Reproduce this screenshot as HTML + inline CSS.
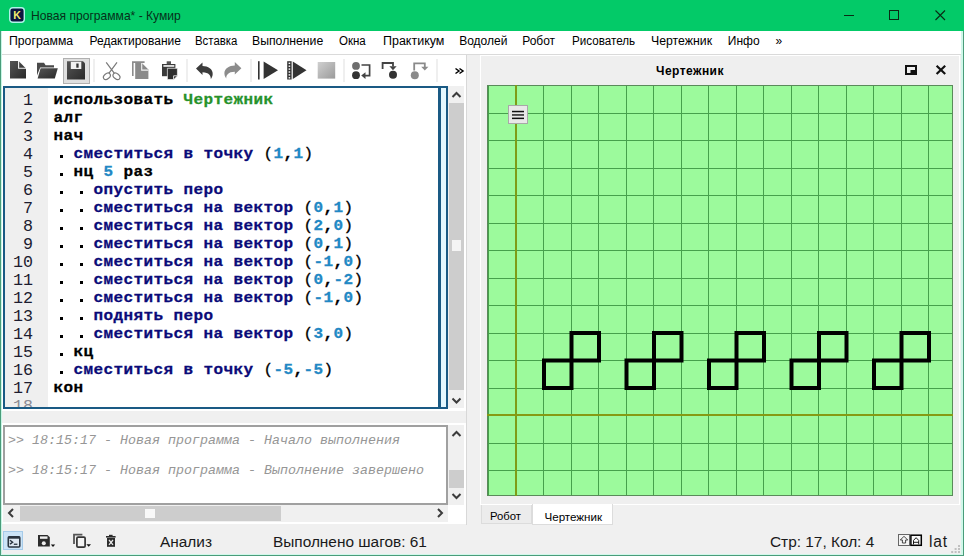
<!DOCTYPE html><html><head><meta charset="utf-8"><style>
*{margin:0;padding:0}
html,body{width:964px;height:556px;overflow:hidden;background:#f0f0f0}
.a{position:absolute}
.t{position:absolute;font-family:'Liberation Sans',sans-serif;white-space:pre;line-height:1}
.code{position:absolute;font-family:"Liberation Mono",monospace;font-size:16px;letter-spacing:0.4px;white-space:pre;line-height:18px;transform:scaleY(0.9);transform-origin:0 13.3px;-webkit-text-stroke:0.3px currentColor}
.ln{position:absolute;width:28px;text-align:right;font-family:'Liberation Mono',monospace;font-size:16.67px;color:#1c1c30;line-height:18px}
</style></head><body><div class="a " style="left:0px;top:0px;width:964px;height:556px;background:#f0f0f0"></div>
<div class="a " style="left:0px;top:0px;width:964px;height:31px;background:#03ca68"></div>
<svg class="a" style="left:9px;top:7px" width="16" height="16" viewBox="0 0 16 16">
<rect x="0.7" y="0.7" width="14.6" height="14.6" rx="3" fill="#0c1640" stroke="#b0f4ea" stroke-width="1.4"/>
<text x="8" y="12.2" text-anchor="middle" font-family="Liberation Sans" font-weight="bold" font-size="10.5" fill="#f4ee70">K</text>
</svg>
<div class="t " style="left:31px;top:10px;font-size:12.1px;color:#06301a">Новая программа* - Кумир</div>
<svg class="a" style="left:830px;top:0px" width="130" height="31">
<rect x="14" y="15" width="10" height="1" fill="#0a2a14"/>
<rect x="59.5" y="10.5" width="9" height="9" fill="none" stroke="#0a2a14" stroke-width="1"/>
<path d="M105.5 10.5 L115 20 M115 10.5 L105.5 20" stroke="#0a2a14" stroke-width="1.1"/>
</svg>
<div class="a " style="left:2px;top:31px;width:960px;height:23px;background:#ffffff"></div>
<div class="a " style="left:2px;top:54px;width:960px;height:1px;background:#dadada"></div>
<div class="t " style="left:9.2px;top:35px;font-size:12px;color:#000;transform:scaleX(1.02);transform-origin:0 0">Программа</div>
<div class="t " style="left:89.5px;top:35px;font-size:12px;color:#000;transform:scaleX(1);transform-origin:0 0">Редактирование</div>
<div class="t " style="left:195.1px;top:35px;font-size:12px;color:#000;transform:scaleX(0.95);transform-origin:0 0">Вставка</div>
<div class="t " style="left:252.2px;top:35px;font-size:12px;color:#000;transform:scaleX(1.02);transform-origin:0 0">Выполнение</div>
<div class="t " style="left:339.0px;top:35px;font-size:12px;color:#000;transform:scaleX(0.96);transform-origin:0 0">Окна</div>
<div class="t " style="left:382.9px;top:35px;font-size:12px;color:#000;transform:scaleX(1.04);transform-origin:0 0">Практикум</div>
<div class="t " style="left:459.2px;top:35px;font-size:12px;color:#000;transform:scaleX(1);transform-origin:0 0">Водолей</div>
<div class="t " style="left:522.2px;top:35px;font-size:12px;color:#000;transform:scaleX(1);transform-origin:0 0">Робот</div>
<div class="t " style="left:571.6px;top:35px;font-size:12px;color:#000;transform:scaleX(0.97);transform-origin:0 0">Рисователь</div>
<div class="t " style="left:650.5px;top:35px;font-size:12px;color:#000;transform:scaleX(1.025);transform-origin:0 0">Чертежник</div>
<div class="t " style="left:727.8000000000001px;top:35px;font-size:12px;color:#000;transform:scaleX(1);transform-origin:0 0">Инфо</div>
<div class="t " style="left:775.6px;top:35px;font-size:12px;color:#000;transform:scaleX(1);transform-origin:0 0">»</div>
<div class="a " style="left:2px;top:55px;width:464px;height:31px;background:#ffffff"></div>
<div class="a " style="left:2px;top:86px;width:464px;height:325px;background:#ffffff"></div>
<div class="a " style="left:3px;top:86px;width:445px;height:323px;border:2px solid #1a5a84;box-sizing:border-box;background:#fff"></div>
<div class="a " style="left:5px;top:88px;width:43px;height:319px;background:#efefef"></div>
<div class="a " style="left:441px;top:88px;width:5px;height:319px;background:#e4f8ff"></div>
<div class="a " style="left:438px;top:88px;width:3px;height:319px;background:#1a5a84"></div>
<div class="a " style="left:448px;top:86px;width:16px;height:322px;background:#f0f0f0"></div>
<div class="a " style="left:449px;top:103px;width:15px;height:287px;background:#cdcdcd"></div>
<div class="a " style="left:452px;top:240px;width:9px;height:11px;background:#f4f4f4"></div>
<div class="a" style="left:5px;top:88px;width:433px;height:319px;overflow:hidden">
<div class="code" style="left:48.5px;top:2.799999999999997px"><span style="color:#000000;font-weight:bold">использовать</span><span style="color:#000000;font-weight:bold"> </span><span style="color:#27922a;font-weight:bold">Чертежник</span></div>
<div class="code" style="left:48.5px;top:20.799999999999997px"><span style="color:#000000;font-weight:bold">алг</span></div>
<div class="code" style="left:48.5px;top:38.8px"><span style="color:#000000;font-weight:bold">нач</span></div>
<div class="code" style="left:68.5px;top:56.80000000000001px"><span style="color:#0a0a78;font-weight:bold">сместиться в точку</span><span style="color:#000000;font-weight:bold"> </span><span style="color:#000000;font-weight:normal">(</span><span style="color:#2288c4;font-weight:bold">1</span><span style="color:#000000;font-weight:bold">,</span><span style="color:#2288c4;font-weight:bold">1</span><span style="color:#000000;font-weight:normal">)</span></div>
<div class="a" style="left:55px;top:67px;width:3px;height:3px;background:#000"></div>
<div class="code" style="left:68.5px;top:74.80000000000001px"><span style="color:#000000;font-weight:bold">нц</span><span style="color:#000000;font-weight:bold"> </span><span style="color:#2288c4;font-weight:bold">5</span><span style="color:#000000;font-weight:bold"> </span><span style="color:#000000;font-weight:bold">раз</span></div>
<div class="a" style="left:55px;top:85px;width:3px;height:3px;background:#000"></div>
<div class="code" style="left:88.5px;top:92.80000000000001px"><span style="color:#0a0a78;font-weight:bold">опустить перо</span></div>
<div class="a" style="left:55px;top:103px;width:3px;height:3px;background:#000"></div>
<div class="a" style="left:75px;top:103px;width:3px;height:3px;background:#000"></div>
<div class="code" style="left:88.5px;top:110.80000000000001px"><span style="color:#0a0a78;font-weight:bold">сместиться на вектор</span><span style="color:#000000;font-weight:bold"> </span><span style="color:#000000;font-weight:normal">(</span><span style="color:#2288c4;font-weight:bold">0</span><span style="color:#000000;font-weight:bold">,</span><span style="color:#2288c4;font-weight:bold">1</span><span style="color:#000000;font-weight:normal">)</span></div>
<div class="a" style="left:55px;top:121px;width:3px;height:3px;background:#000"></div>
<div class="a" style="left:75px;top:121px;width:3px;height:3px;background:#000"></div>
<div class="code" style="left:88.5px;top:128.8px"><span style="color:#0a0a78;font-weight:bold">сместиться на вектор</span><span style="color:#000000;font-weight:bold"> </span><span style="color:#000000;font-weight:normal">(</span><span style="color:#2288c4;font-weight:bold">2</span><span style="color:#000000;font-weight:bold">,</span><span style="color:#2288c4;font-weight:bold">0</span><span style="color:#000000;font-weight:normal">)</span></div>
<div class="a" style="left:55px;top:139px;width:3px;height:3px;background:#000"></div>
<div class="a" style="left:75px;top:139px;width:3px;height:3px;background:#000"></div>
<div class="code" style="left:88.5px;top:146.8px"><span style="color:#0a0a78;font-weight:bold">сместиться на вектор</span><span style="color:#000000;font-weight:bold"> </span><span style="color:#000000;font-weight:normal">(</span><span style="color:#2288c4;font-weight:bold">0</span><span style="color:#000000;font-weight:bold">,</span><span style="color:#2288c4;font-weight:bold">1</span><span style="color:#000000;font-weight:normal">)</span></div>
<div class="a" style="left:55px;top:157px;width:3px;height:3px;background:#000"></div>
<div class="a" style="left:75px;top:157px;width:3px;height:3px;background:#000"></div>
<div class="code" style="left:88.5px;top:164.8px"><span style="color:#0a0a78;font-weight:bold">сместиться на вектор</span><span style="color:#000000;font-weight:bold"> </span><span style="color:#000000;font-weight:normal">(</span><span style="color:#2288c4;font-weight:bold">-1</span><span style="color:#000000;font-weight:bold">,</span><span style="color:#2288c4;font-weight:bold">0</span><span style="color:#000000;font-weight:normal">)</span></div>
<div class="a" style="left:55px;top:175px;width:3px;height:3px;background:#000"></div>
<div class="a" style="left:75px;top:175px;width:3px;height:3px;background:#000"></div>
<div class="code" style="left:88.5px;top:182.8px"><span style="color:#0a0a78;font-weight:bold">сместиться на вектор</span><span style="color:#000000;font-weight:bold"> </span><span style="color:#000000;font-weight:normal">(</span><span style="color:#2288c4;font-weight:bold">0</span><span style="color:#000000;font-weight:bold">,</span><span style="color:#2288c4;font-weight:bold">-2</span><span style="color:#000000;font-weight:normal">)</span></div>
<div class="a" style="left:55px;top:193px;width:3px;height:3px;background:#000"></div>
<div class="a" style="left:75px;top:193px;width:3px;height:3px;background:#000"></div>
<div class="code" style="left:88.5px;top:200.8px"><span style="color:#0a0a78;font-weight:bold">сместиться на вектор</span><span style="color:#000000;font-weight:bold"> </span><span style="color:#000000;font-weight:normal">(</span><span style="color:#2288c4;font-weight:bold">-1</span><span style="color:#000000;font-weight:bold">,</span><span style="color:#2288c4;font-weight:bold">0</span><span style="color:#000000;font-weight:normal">)</span></div>
<div class="a" style="left:55px;top:211px;width:3px;height:3px;background:#000"></div>
<div class="a" style="left:75px;top:211px;width:3px;height:3px;background:#000"></div>
<div class="code" style="left:88.5px;top:218.8px"><span style="color:#0a0a78;font-weight:bold">поднять перо</span></div>
<div class="a" style="left:55px;top:229px;width:3px;height:3px;background:#000"></div>
<div class="a" style="left:75px;top:229px;width:3px;height:3px;background:#000"></div>
<div class="code" style="left:88.5px;top:236.8px"><span style="color:#0a0a78;font-weight:bold">сместиться на вектор</span><span style="color:#000000;font-weight:bold"> </span><span style="color:#000000;font-weight:normal">(</span><span style="color:#2288c4;font-weight:bold">3</span><span style="color:#000000;font-weight:bold">,</span><span style="color:#2288c4;font-weight:bold">0</span><span style="color:#000000;font-weight:normal">)</span></div>
<div class="a" style="left:55px;top:247px;width:3px;height:3px;background:#000"></div>
<div class="a" style="left:75px;top:247px;width:3px;height:3px;background:#000"></div>
<div class="code" style="left:68.5px;top:254.8px"><span style="color:#000000;font-weight:bold">кц</span></div>
<div class="a" style="left:55px;top:265px;width:3px;height:3px;background:#000"></div>
<div class="code" style="left:68.5px;top:272.8px"><span style="color:#0a0a78;font-weight:bold">сместиться в точку</span><span style="color:#000000;font-weight:bold"> </span><span style="color:#000000;font-weight:normal">(</span><span style="color:#2288c4;font-weight:bold">-5</span><span style="color:#000000;font-weight:bold">,</span><span style="color:#2288c4;font-weight:bold">-5</span><span style="color:#000000;font-weight:normal">)</span></div>
<div class="a" style="left:55px;top:283px;width:3px;height:3px;background:#000"></div>
<div class="code" style="left:48.5px;top:290.8px"><span style="color:#000000;font-weight:bold">кон</span></div>
<div class="ln" style="left:0px;top:4px">1</div>
<div class="ln" style="left:0px;top:22px">2</div>
<div class="ln" style="left:0px;top:40px">3</div>
<div class="ln" style="left:0px;top:58px">4</div>
<div class="ln" style="left:0px;top:76px">5</div>
<div class="ln" style="left:0px;top:94px">6</div>
<div class="ln" style="left:0px;top:112px">7</div>
<div class="ln" style="left:0px;top:130px">8</div>
<div class="ln" style="left:0px;top:148px">9</div>
<div class="ln" style="left:0px;top:166px">10</div>
<div class="ln" style="left:0px;top:184px">11</div>
<div class="ln" style="left:0px;top:202px">12</div>
<div class="ln" style="left:0px;top:220px">13</div>
<div class="ln" style="left:0px;top:238px">14</div>
<div class="ln" style="left:0px;top:256px">15</div>
<div class="ln" style="left:0px;top:274px">16</div>
<div class="ln" style="left:0px;top:292px">17</div>
<div class="ln" style="left:0px;top:310px;color:#8a8a94">18</div>
</div>
<div class="a " style="left:2px;top:423px;width:464px;height:101px;background:#ffffff"></div>
<div class="a " style="left:3px;top:425px;width:445px;height:80px;border:2px solid #a0a0a0;box-sizing:border-box;background:#fff"></div>
<div class="t " style="left:8px;top:434px;font-family:'Liberation Mono';font-style:italic;font-size:13.33px;color:#969696;white-space:pre">&gt;&gt; 18:15:17 - Новая программа - Начало выполнения</div>
<div class="t " style="left:8px;top:464px;font-family:'Liberation Mono';font-style:italic;font-size:13.33px;color:#969696;white-space:pre">&gt;&gt; 18:15:17 - Новая программа - Выполнение завершено</div>
<div class="a " style="left:448px;top:425px;width:16px;height:80px;background:#f0f0f0"></div>
<div class="a " style="left:449px;top:470px;width:15px;height:18px;background:#cdcdcd"></div>
<div class="a " style="left:3px;top:505px;width:445px;height:17px;background:#f0f0f0"></div>
<div class="a " style="left:20px;top:506px;width:261px;height:15px;background:#cdcdcd"></div>
<div class="a " style="left:145px;top:509px;width:10px;height:9px;background:#f8f8f8"></div>
<div class="a " style="left:448px;top:505px;width:16px;height:17px;background:#ffffff"></div>
<svg class="a" style="left:0;top:0" width="964" height="556"><path d="M452.5,97 L456.5,93 L460.5,97" fill="none" stroke="#3c3c3c" stroke-width="2"/><path d="M452.5,398.5 L456.5,402.5 L460.5,398.5" fill="none" stroke="#3c3c3c" stroke-width="2"/><path d="M452.5,436 L456.5,432 L460.5,436" fill="none" stroke="#3c3c3c" stroke-width="2"/><path d="M452.5,494 L456.5,498 L460.5,494" fill="none" stroke="#3c3c3c" stroke-width="2"/><path d="M13,509 L9,513 L13,517" fill="none" stroke="#3c3c3c" stroke-width="2"/><path d="M438,509 L442,513 L438,517" fill="none" stroke="#3c3c3c" stroke-width="2"/></svg>
<div class="t " style="left:160px;top:534px;font-size:15.4px;color:#1a1a1a">Анализ</div>
<div class="t " style="left:273px;top:534px;font-size:15.4px;color:#1a1a1a">Выполнено шагов: 61</div>
<div class="t " style="left:770px;top:534px;font-size:15.4px;color:#1a1a1a">Стр: 17, Кол: 4</div>
<div class="t " style="left:929px;top:534px;font-size:15.6px;letter-spacing:0.8px;color:#1a1a1a">lat</div>
<div class="a " style="left:480px;top:55px;width:480px;height:450px;background:#ffffff"></div>
<div class="a " style="left:481px;top:56px;width:478px;height:448px;background:#efefef"></div>
<div class="t " style="left:656px;top:64.5px;font-size:12px;letter-spacing:0.45px;font-weight:bold;color:#000">Чертежник</div>
<svg class="a" style="left:487px;top:85px" width="466" height="411"><rect x="0" y="0" width="466" height="411" fill="#9cfa9c"/><rect x="1" y="0" width="1" height="411" fill="#46a04c"/><rect x="56" y="0" width="1" height="411" fill="#46a04c"/><rect x="84" y="0" width="1" height="411" fill="#46a04c"/><rect x="111" y="0" width="1" height="411" fill="#46a04c"/><rect x="139" y="0" width="1" height="411" fill="#46a04c"/><rect x="166" y="0" width="1" height="411" fill="#46a04c"/><rect x="194" y="0" width="1" height="411" fill="#46a04c"/><rect x="221" y="0" width="1" height="411" fill="#46a04c"/><rect x="249" y="0" width="1" height="411" fill="#46a04c"/><rect x="276" y="0" width="1" height="411" fill="#46a04c"/><rect x="304" y="0" width="1" height="411" fill="#46a04c"/><rect x="331" y="0" width="1" height="411" fill="#46a04c"/><rect x="359" y="0" width="1" height="411" fill="#46a04c"/><rect x="386" y="0" width="1" height="411" fill="#46a04c"/><rect x="414" y="0" width="1" height="411" fill="#46a04c"/><rect x="441" y="0" width="1" height="411" fill="#46a04c"/><rect x="0" y="385" width="466" height="1" fill="#46a04c"/><rect x="0" y="358" width="466" height="1" fill="#46a04c"/><rect x="0" y="303" width="466" height="1" fill="#46a04c"/><rect x="0" y="275" width="466" height="1" fill="#46a04c"/><rect x="0" y="248" width="466" height="1" fill="#46a04c"/><rect x="0" y="220" width="466" height="1" fill="#46a04c"/><rect x="0" y="193" width="466" height="1" fill="#46a04c"/><rect x="0" y="165" width="466" height="1" fill="#46a04c"/><rect x="0" y="138" width="466" height="1" fill="#46a04c"/><rect x="0" y="110" width="466" height="1" fill="#46a04c"/><rect x="0" y="83" width="466" height="1" fill="#46a04c"/><rect x="0" y="55" width="466" height="1" fill="#46a04c"/><rect x="0" y="28" width="466" height="1" fill="#46a04c"/><rect x="0.5" y="0.5" width="465" height="410" fill="none" stroke="#5a8a5a" stroke-width="1"/><rect x="28" y="0" width="2" height="411" fill="#7e9c18"/><rect x="0" y="329" width="466" height="2" fill="#869a14"/><path d="M57.00,303.00 L57.00,275.50 L112.00,275.50 L112.00,248.00 L84.50,248.00 L84.50,303.00 L57.00,303.00Z" fill="none" stroke="#000" stroke-width="4" stroke-linecap="square" stroke-linejoin="miter"/><path d="M139.50,303.00 L139.50,275.50 L194.50,275.50 L194.50,248.00 L167.00,248.00 L167.00,303.00 L139.50,303.00Z" fill="none" stroke="#000" stroke-width="4" stroke-linecap="square" stroke-linejoin="miter"/><path d="M222.00,303.00 L222.00,275.50 L277.00,275.50 L277.00,248.00 L249.50,248.00 L249.50,303.00 L222.00,303.00Z" fill="none" stroke="#000" stroke-width="4" stroke-linecap="square" stroke-linejoin="miter"/><path d="M304.50,303.00 L304.50,275.50 L359.50,275.50 L359.50,248.00 L332.00,248.00 L332.00,303.00 L304.50,303.00Z" fill="none" stroke="#000" stroke-width="4" stroke-linecap="square" stroke-linejoin="miter"/><path d="M387.00,303.00 L387.00,275.50 L442.00,275.50 L442.00,248.00 L414.50,248.00 L414.50,303.00 L387.00,303.00Z" fill="none" stroke="#000" stroke-width="4" stroke-linecap="square" stroke-linejoin="miter"/></svg>
<div class="a " style="left:508px;top:105px;width:20px;height:19px;background:#e8e8e8;border:1px solid #a8a8a8;box-sizing:border-box"></div>
<svg class="a" style="left:508px;top:105px" width="20" height="19"><rect x="4" y="5.8" width="12" height="1.5" fill="#111"/><rect x="4" y="9.2" width="12" height="1.5" fill="#222"/><rect x="4" y="12.6" width="12" height="1.5" fill="#111"/></svg>
<div class="a " style="left:481px;top:505px;width:51px;height:19px;background:#ececec;border:1px solid #dcdcdc;border-top:none;box-sizing:border-box"></div>
<div class="t " style="left:490px;top:510.5px;font-size:11.3px;color:#000">Робот</div>
<div class="a " style="left:532px;top:504px;width:81px;height:21px;background:#ffffff;border:1px solid #dcdcdc;border-top:none;box-sizing:border-box"></div>
<div class="t " style="left:544.5px;top:510.8px;font-size:11.6px;color:#000">Чертежник</div>
<div class="a " style="left:466px;top:55px;width:1px;height:470px;background:#d8d8d8"></div>
<svg class="a" style="left:0;top:0" width="964" height="556"><defs><linearGradient id="gd" x1="0" y1="0" x2="1" y2="1"><stop offset="0" stop-color="#555"/><stop offset="1" stop-color="#2a2a2a"/></linearGradient><linearGradient id="gs" x1="0" y1="0" x2="1" y2="1"><stop offset="0" stop-color="#d0d0d0"/><stop offset="1" stop-color="#9a9a9a"/></linearGradient></defs><path d="M10,61 L18.6,61 L26,68.6 L26,78.6 L10,78.6 Z" fill="url(#gd)"/><path d="M18.6,61 L18.6,68.2 L26,68.2" fill="none" stroke="#f4f4f4" stroke-width="1.1"/><path d="M37,62.7 L44,62.7 L45.6,65.2 L54,65.2 L54,67.5 L40.2,67.5 L37,75.5 Z" fill="#4a4a4a"/><path d="M40.6,68.2 L57.8,68.2 L54.8,78.5 L37.6,78.5 Z" fill="url(#gd)"/><rect x="63.5" y="58.5" width="26" height="25" fill="#dfdfdf" stroke="#b0b0b0" stroke-width="1"/><path d="M67,61.2 L83,61.2 L85,63.2 L85,79.5 L67,79.5 Z" fill="url(#gd)"/><rect x="70.8" y="61.8" width="10.5" height="7.2" fill="#f0f0f0"/><rect x="76.3" y="63.5" width="2.3" height="4.2" fill="#333"/><rect x="93.5" y="59" width="1" height="23" fill="#e0e0e0"/><rect x="186.5" y="59" width="1" height="23" fill="#e0e0e0"/><rect x="250.5" y="59" width="1" height="23" fill="#e0e0e0"/><rect x="343.5" y="59" width="1" height="23" fill="#e0e0e0"/><rect x="436.5" y="59" width="1" height="23" fill="#e0e0e0"/><g fill="none" stroke="#7a7a7a" stroke-width="1.2"><path d="M106.2,62.3 L114.2,73.2 M117,62.3 L109,73.2"/><ellipse cx="106.9" cy="76.3" rx="3.9" ry="2.6" transform="rotate(-40 106.9 76.3)"/><ellipse cx="116.5" cy="76.3" rx="3.9" ry="2.6" transform="rotate(40 116.5 76.3)"/></g><path d="M132.8,76 L132.8,62.1 L144.6,62.1" fill="none" stroke="#8c8c8c" stroke-width="1.6"/><path d="M135.2,62.9 L141.9,62.9 L148.4,69.6 L148.4,79 L135.2,79 Z" fill="#8a8a8a"/><path d="M141.7,62.9 L141.7,70.1 L148.4,70.1" fill="none" stroke="#f2f2f2" stroke-width="1.1"/><rect x="162" y="64" width="13.4" height="12.2" fill="#3a3a3a"/><rect x="166.7" y="61.3" width="4.3" height="2.9" fill="#555"/><rect x="163.4" y="65.1" width="10.9" height="1.7" fill="#f0f0f0"/><path d="M167.4,68.3 L177.4,68.3 L177.4,76 L173.8,79.6 L167.4,79.6 Z" fill="#2e2e2e" stroke="#f8f8f8" stroke-width="0.7"/><path d="M173.6,79.4 L173.6,75.8 L177.3,75.8" fill="none" stroke="#f0f0f0" stroke-width="0.9"/><path d="M196,68.6 L202.5,62.5 L202.5,66 C208,66 213,69 212.7,74 C212.6,76.5 211.6,78 210.8,79 C211,76 209,72.3 202.5,72.3 L202.5,75 Z" fill="#3c3c3c"/><path d="M241.4,68.2 L234.8,62 L234.8,65.5 C229.3,65.5 224.2,68.6 224.4,73.6 C224.5,76 225.5,77.5 226.3,78.4 C226,75.5 228.2,71.8 234.8,71.8 L234.8,74.6 Z" fill="#8c8c8c"/><rect x="258" y="61.2" width="1.6" height="18.3" fill="#333"/><path d="M263.6,61.5 L278,70.3 L263.6,79 Z" fill="#333"/><rect x="287.2" y="61.2" width="4.4" height="18.3" fill="#333"/><rect x="288.6" y="62.6" width="1.6" height="1.4" fill="#fff"/><rect x="288.6" y="65.5" width="1.6" height="1.4" fill="#fff"/><rect x="288.6" y="68.4" width="1.6" height="1.4" fill="#fff"/><rect x="288.6" y="71.3" width="1.6" height="1.4" fill="#fff"/><rect x="288.6" y="74.2" width="1.6" height="1.4" fill="#fff"/><rect x="288.6" y="77.1" width="1.6" height="1.4" fill="#fff"/><path d="M292.8,61.5 L306.5,70.3 L292.8,79 Z" fill="#333"/><rect x="317.7" y="62" width="17.5" height="16.6" fill="url(#gs)"/><circle cx="356" cy="65.9" r="3.9" fill="#6e6e6e"/><circle cx="356" cy="75.2" r="3.9" fill="#333"/><path d="M361.5,65 L369.6,65 L369.6,75.6 L365,75.6" fill="none" stroke="#444" stroke-width="1.7"/><path d="M361.2,75.6 L365.5,72.3 L365.5,78.9 Z" fill="#444"/><path d="M382.6,69 L382.6,63 L393,63 L393,66.5" fill="none" stroke="#444" stroke-width="1.8"/><path d="M389.4,66.3 L396.6,66.3 L393,70.2 Z" fill="#444"/><circle cx="393" cy="74.8" r="4" fill="#333"/><path d="M414.2,70.5 L414.2,63.3 L424.8,63.3 L424.8,67" fill="none" stroke="#8a8a8a" stroke-width="1.8"/><path d="M421.2,66.8 L428.4,66.8 L424.8,70.6 Z" fill="#8a8a8a"/><circle cx="414.8" cy="75.2" r="4" fill="#8a8a8a"/><path d="M455.5,68.5 L459,71 L455.5,73.5 M459.5,68.5 L463,71 L459.5,73.5" fill="none" stroke="#000" stroke-width="1.5"/><rect x="906" y="66" width="10" height="8" fill="none" stroke="#111" stroke-width="2"/><rect x="910.5" y="70" width="5.5" height="4" fill="#111"/><path d="M936.6,65.8 L945.2,74 M945.2,65.8 L936.6,74" stroke="#111" stroke-width="2.2"/><rect x="3.5" y="531.5" width="19" height="18" fill="#cce4f7" stroke="#a6cbe9" stroke-width="1"/><rect x="8.3" y="536.8" width="11.5" height="10.2" rx="1" fill="#dfe9f2" stroke="#2b3540" stroke-width="1.6"/><rect x="8.3" y="536.5" width="11.5" height="2.2" fill="#2b3540"/><path d="M10,540.3 L12.6,542.2 L10,544.1" fill="none" stroke="#2b3540" stroke-width="1.4"/><rect x="13.8" y="543.6" width="3.6" height="1.3" fill="#2b3540"/><path d="M38,535 L47.5,535 L49.8,537.3 L49.8,546.5 L38,546.5 Z" fill="#2c2c2c"/><rect x="40" y="536.4" width="7.5" height="2.4" fill="#f0f0f0"/><circle cx="43.8" cy="543.3" r="2" fill="#f0f0f0"/><path d="M50.8,544.4 L55.2,544.4 L53,547 Z" fill="#111"/><path d="M74,544 L74,534.6 L82.4,534.6" fill="none" stroke="#555" stroke-width="1.8"/><rect x="76.9" y="537.1" width="8.2" height="10" rx="1.2" fill="#f4f4f4" stroke="#333" stroke-width="1.7"/><path d="M86.4,544.3 L91,544.3 L88.7,546.8 Z" fill="#111"/><rect x="106" y="536" width="9.6" height="1.6" fill="#2c2c2c"/><rect x="109" y="534.8" width="3.6" height="1.4" fill="#2c2c2c"/><rect x="107" y="538" width="8" height="8.8" fill="#2c2c2c"/><path d="M109,540 L113,544.8 M113,540 L109,544.8" stroke="#e8e8e8" stroke-width="1.3"/><rect x="898.5" y="534.5" width="11" height="11" fill="#f4f4f4" stroke="#666" stroke-width="1"/><path d="M904,536.3 L907.7,540 L905.6,540 L905.6,543 L902.4,543 L902.4,540 L900.3,540 Z" fill="none" stroke="#333" stroke-width="0.9"/><rect x="910.9" y="535.2" width="10.4" height="10.1" fill="#fbfbfb" stroke="#000" stroke-width="1.5"/><path d="M913.5,544.4 L913.5,540.4 L916.1,537.7 L918.7,540.4 L918.7,544.4 M913.5,542.3 L918.7,542.3" fill="none" stroke="#000" stroke-width="0.9"/><rect x="958" y="545" width="2" height="2" fill="#c0c0c0"/><rect x="954.6" y="548" width="2" height="2" fill="#c0c0c0"/><rect x="958" y="548" width="2" height="2" fill="#c0c0c0"/><rect x="951.2" y="551" width="2" height="2" fill="#c0c0c0"/><rect x="954.6" y="551" width="2" height="2" fill="#c0c0c0"/><rect x="958" y="551" width="2" height="2" fill="#c0c0c0"/></svg>
<div class="a " style="left:1px;top:31px;width:1px;height:524px;background:#c8f6e6"></div>
<div class="a " style="left:961px;top:31px;width:2px;height:524px;background:#d0f8ea"></div>
<div class="a " style="left:1px;top:554px;width:962px;height:1px;background:#d0f8ea"></div>
<div class="a " style="left:0px;top:31px;width:1px;height:525px;background:#4a9c7a"></div>
<div class="a " style="left:963px;top:31px;width:1px;height:525px;background:#4a9c7a"></div>
<div class="a " style="left:0px;top:555px;width:964px;height:1px;background:#4a9c7a"></div></body></html>
